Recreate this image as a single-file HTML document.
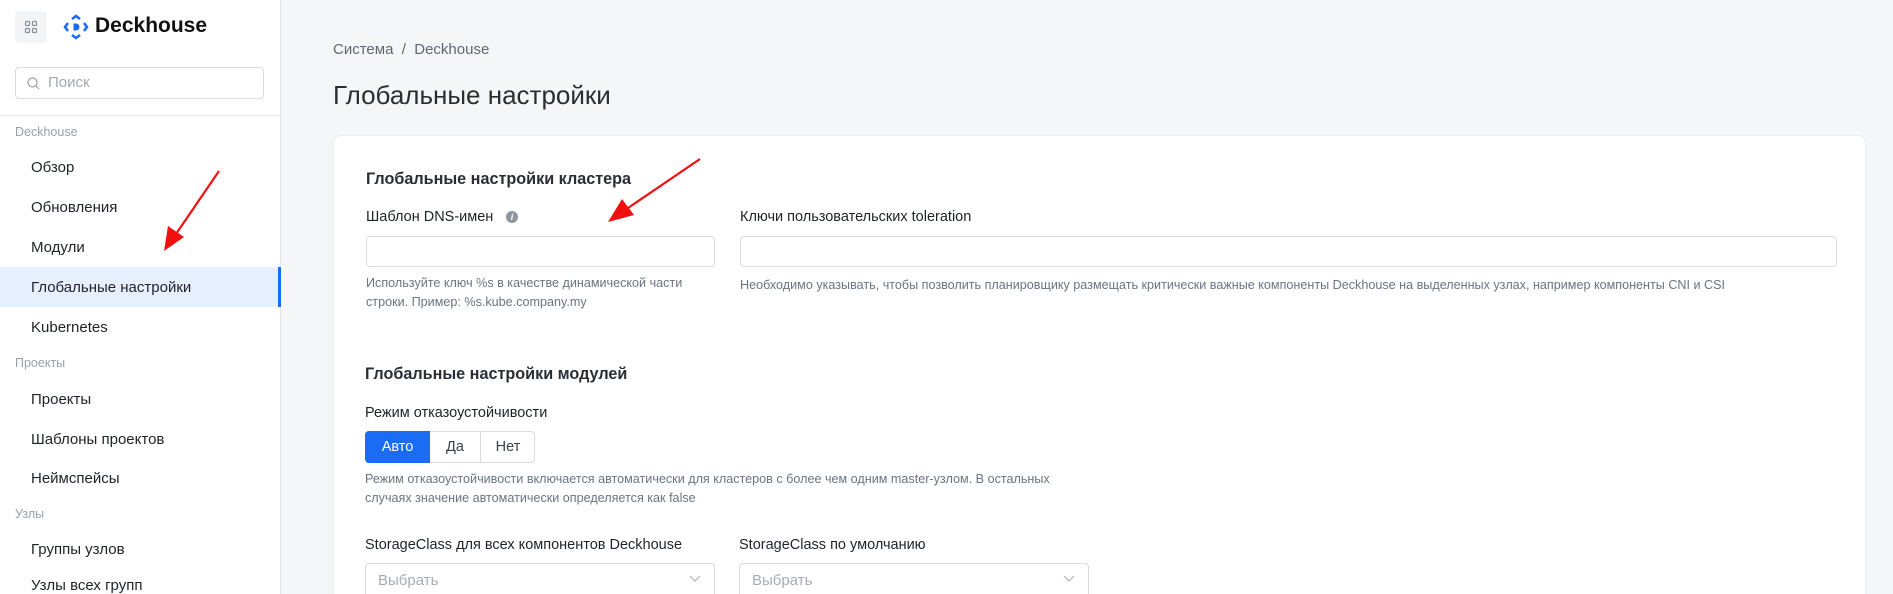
<!DOCTYPE html>
<html style="overflow:hidden;width:1893px;height:594px"><head><meta charset="utf-8"><style>
*{box-sizing:border-box;margin:0;padding:0}
body{width:1893px;height:594px;overflow:hidden;background:#f5f6f8;font-family:"Liberation Sans",sans-serif;position:relative;color:#1f2328}
.abs{position:absolute;white-space:nowrap}
#side{position:absolute;left:0;top:0;width:281px;height:594px;background:#fff;border-right:1px solid #e3e5e8}
.item{position:absolute;left:31px;font-size:15px;color:#1f2328;line-height:20px}
.sec{position:absolute;left:15px;font-size:12.5px;color:#9aa0a8;line-height:16px}
.inp{position:absolute;border:1px solid #d9dce1;border-radius:4px;background:#fff}
.help{font-size:12.6px;color:#6b7480;line-height:19px}
.lbl{font-size:14.5px;color:#1f2328}
</style></head><body>
<div id="side">
 <div class="abs" style="left:15px;top:11px;width:32px;height:32px;background:#f3f4f6;border-radius:4px"></div>
 <svg class="abs" style="left:24px;top:20px" width="14" height="14" viewBox="0 0 14 14" fill="none" stroke="#8a9099" stroke-width="1.2"><rect x="1.5" y="1.5" width="4" height="4" rx="1"/><rect x="8.5" y="1.5" width="4" height="4" rx="1"/><rect x="1.5" y="8.5" width="4" height="4" rx="1"/><rect x="8.5" y="8.5" width="4" height="4" rx="1"/></svg>
 <svg class="abs" style="left:63px;top:14px" width="26" height="26" viewBox="0 0 26 26" fill="none" stroke="#1a6cf5" stroke-width="2.6" stroke-linejoin="miter"><path d="M9 5l4-3 4 3"/><path d="M9 21l4 3 4-3"/><path d="M5 9l-3 4 3 4"/><path d="M21 9l3 4-3 4"/><path d="M10.5 9.5h2.5a3.5 3.5 0 010 7h-2.5z" fill="#1a6cf5" stroke="none"/></svg>
 <div class="abs" style="left:95px;top:14px;font-size:21px;font-weight:bold;color:#111">Deckhouse</div>
 <div class="inp" style="left:15px;top:67px;width:249px;height:32px;border-radius:4px"></div>
 <svg class="abs" style="left:27px;top:77px" width="13" height="13" viewBox="0 0 13 13" fill="none" stroke="#9aa0a8" stroke-width="1.2"><circle cx="5.5" cy="5.5" r="4.5"/><path d="M9 9l3 3"/></svg>
 <div class="abs" style="left:48px;top:74px;font-size:15px;color:#a3a8b0">Поиск</div>
 <div class="abs" style="left:0;top:115px;width:281px;height:1px;background:#e3e5e8"></div>
 <div class="sec" style="top:124px">Deckhouse</div>
 <div class="item" style="top:158px">Обзор</div>
 <div class="item" style="top:198px">Обновления</div>
 <div class="item" style="top:238px">Модули</div>
 <div class="abs" style="left:0;top:267px;width:281px;height:40px;background:#e6effd"></div>
 <div class="abs" style="left:278px;top:267px;width:3px;height:40px;background:#1a6cf5"></div>
 <div class="item" style="top:278px">Глобальные настройки</div>
 <div class="item" style="top:318px">Kubernetes</div>
 <div class="sec" style="top:355px">Проекты</div>
 <div class="item" style="top:390px">Проекты</div>
 <div class="item" style="top:430px">Шаблоны проектов</div>
 <div class="item" style="top:469px">Неймспейсы</div>
 <div class="sec" style="top:506px">Узлы</div>
 <div class="item" style="top:540px">Группы узлов</div>
 <div class="item" style="top:576px">Узлы всех групп</div>
</div>
<div class="abs" style="left:333px;top:41px;font-size:15px;color:#5f6670">Система&nbsp;&nbsp;/&nbsp;&nbsp;Deckhouse</div>
<div class="abs" style="left:333px;top:80px;font-size:26px;color:#2a2e33">Глобальные настройки</div>
<div class="abs" style="left:333px;top:135px;width:1533px;height:459px;background:#fff;border-radius:8px 8px 0 0;border:1px solid #eceef1;border-bottom:none"></div>
<div class="abs" style="left:366px;top:170px;font-size:16.2px;font-weight:bold;color:#2a2e33">Глобальные настройки кластера</div>
<div class="abs lbl" style="left:366px;top:209px">Шаблон DNS-имен</div>
<div class="abs" style="left:506px;top:211px;width:12px;height:12px;border-radius:50%;background:#8f959d;color:#fff;font-size:9px;font-weight:bold;text-align:center;line-height:12px;font-style:italic">i</div>
<div class="inp" style="left:366px;top:236px;width:349px;height:31px"></div>
<div class="abs help" style="left:366px;top:274px">Используйте ключ %s в качестве динамической части<br>строки. Пример: %s.kube.company.my</div>
<div class="abs lbl" style="left:740px;top:209px">Ключи пользовательских toleration</div>
<div class="inp" style="left:740px;top:236px;width:1097px;height:31px"></div>
<div class="abs help" style="left:740px;top:276px">Необходимо указывать, чтобы позволить планировщику размещать критически важные компоненты Deckhouse на выделенных узлах, например компоненты CNI и CSI</div>
<div class="abs" style="left:365px;top:365px;font-size:16.2px;font-weight:bold;color:#2a2e33">Глобальные настройки модулей</div>
<div class="abs lbl" style="left:365px;top:405px">Режим отказоустойчивости</div>
<div class="abs" style="left:365px;top:431px;width:170px;height:32px;border:1px solid #d9dce1;border-radius:4px;background:#fff"></div>
<div class="abs" style="left:365px;top:431px;width:65px;height:32px;background:#1a6cf5;border-radius:4px 0 0 4px;color:#fff;font-size:14.5px;text-align:center;line-height:32px">Авто</div>
<div class="abs" style="left:430px;top:431px;width:51px;height:32px;border-right:1px solid #d9dce1;font-size:14.5px;text-align:center;line-height:32px;color:#3a3f45">Да</div>
<div class="abs" style="left:481px;top:431px;width:54px;height:32px;font-size:14.5px;text-align:center;line-height:32px;color:#3a3f45">Нет</div>
<div class="abs help" style="left:365px;top:470px">Режим отказоустойчивости включается автоматически для кластеров с более чем одним master-узлом. В остальных<br>случаях значение автоматически определяется как false</div>
<div class="abs lbl" style="left:365px;top:537px">StorageClass для всех компонентов Deckhouse</div>
<div class="abs lbl" style="left:739px;top:537px">StorageClass по умолчанию</div>
<div class="abs" style="left:365px;top:563px;width:350px;height:31px;border:1px solid #d9dce1;border-bottom:none;border-radius:4px 4px 0 0;background:#fff"></div>
<div class="abs" style="left:378px;top:572px;font-size:15px;color:#a8adb5">Выбрать</div>
<div class="abs" style="left:739px;top:563px;width:350px;height:31px;border:1px solid #d9dce1;border-bottom:none;border-radius:4px 4px 0 0;background:#fff"></div>
<div class="abs" style="left:752px;top:572px;font-size:15px;color:#a8adb5">Выбрать</div>
<svg class="abs" style="left:0;top:0" width="1893" height="594" fill="none">
 <path d="M690 576l5 5 5-5M1064 576l5 5 5-5" stroke="#b0b5bc" stroke-width="1.2"/>
 <path d="M219 171L176 234" stroke="#f01010" stroke-width="2.2"/>
 <path d="M164 251L168 226L184 237Z" fill="#f01010"/>
 <path d="M700 159L628 208" stroke="#f01010" stroke-width="2.2"/>
 <path d="M608 222L622 199L634 215Z" fill="#f01010"/>
</svg>
</body></html>
